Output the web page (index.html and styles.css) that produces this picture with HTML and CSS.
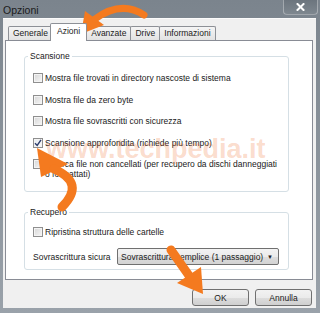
FILE: index.html
```html
<!DOCTYPE html>
<html lang="it">
<head>
<meta charset="utf-8">
<title>Opzioni</title>
<link rel="stylesheet" href="styles.css">
</head>
<body>
<div class="window">
  <div class="titlebar">
    <span class="title">Opzioni</span>
    <span class="close"><svg width="9" height="8" viewBox="0 0 9 8"><path d="M1.5 1 L7.5 7 M7.5 1 L1.5 7" stroke="#ffffff" stroke-width="2" stroke-linecap="square"/></svg></span>
  </div>
  <div class="client">
    <div class="tabs">
      <span class="tab">Generale</span>
      <span class="tab active">Azioni</span>
      <span class="tab">Avanzate</span>
      <span class="tab">Drive</span>
      <span class="tab">Informazioni</span>
    </div>
    <div class="panel">
      <fieldset class="group scan">
        <legend>Scansione</legend>
        <div class="rows">
          <div class="row"><span class="cb"></span><span>Mostra file trovati in directory nascoste di sistema</span></div>
          <div class="row"><span class="cb"></span><span>Mostra file da zero byte</span></div>
          <div class="row"><span class="cb"></span><span>Mostra file sovrascritti con sicurezza</span></div>
          <div class="row"><span class="cb checked"><svg width="8" height="8" viewBox="0 0 8 8"><path d="M1 4.2 L3.2 6.5 L7 0.8" fill="none" stroke="#2a3a6a" stroke-width="1.4"/></svg></span><span>Scansione approfondita (richiede più tempo)</span></div>
          <div class="row"><span class="cb"></span><span>Ricerca file non cancellati (per recupero da dischi danneggiati<br>o formattati)</span></div>
        </div>
      </fieldset>
      <fieldset class="group rec">
        <legend>Recupero</legend>
        <div class="rows rec-rows">
          <div class="row"><span class="cb"></span><span>Ripristina struttura delle cartelle</span></div>
          <div class="select-row">
            <span>Sovrascrittura sicura</span>
            <span class="select"><span>Sovrascrittura semplice (1 passaggio)</span><span class="caret">▼</span></span>
          </div>
        </div>
      </fieldset>
    </div>
    <div class="buttons">
      <span class="btn">OK</span>
      <span class="btn">Annulla</span>
    </div>
  </div>
  <div class="watermark">www.techpedia.it</div>
  <svg class="arrows" width="320" height="313" viewBox="0 0 320 313">
    <g fill="#f47a1f" stroke="none">
      <polygon points="81,34 85,11 104,25"/>
      <polygon points="37,148 41,177 68,164"/>
      <polygon points="203,294 177,283 201,267"/>
    </g>
    <g fill="none" stroke="#f47a1f" stroke-linecap="round">
      <path d="M95,19 Q121,0 144,15" stroke-width="7"/>
      <path d="M54,169 Q86,183 62,207" stroke-width="9"/>
      <path d="M171,250 L190,277" stroke-width="9"/>
    </g>
  </svg>
</div>
</body>
</html>
```

FILE: styles.css
```css
* { box-sizing: border-box; }
html, body { margin: 0; padding: 0; }
body {
  width: 320px;
  height: 313px;
  overflow: hidden;
  font-family: "Liberation Sans", Arial, sans-serif;
  font-size: 8.5px;
  color: #1a1a1a;
  background: #8a929b;
}
.window {
  position: relative;
  width: 320px;
  height: 313px;
  background: linear-gradient(#7b848d, #9aa2aa);
  display: flex;
  flex-direction: column;
  padding: 0 4px 5px 3px;
}
.titlebar {
  height: 18px;
  display: flex;
  align-items: center;
  justify-content: space-between;
}
.title {
  font-size: 10.5px;
  color: #1b1b1b;
  margin-top: 2px;
}
.close {
  align-self: flex-start;
  width: 35px;
  height: 15px;
  margin-right: -2px;
  border: 1px solid rgba(255,255,255,0.35);
  border-top: none;
  border-radius: 0 0 4px 4px;
  background: linear-gradient(#6c757e, #7e878f);
  display: flex;
  align-items: center;
  justify-content: center;
}
.client {
  flex: 1;
  background: #f0f0f0;
  border-top: 1px solid #fbfbfb;
  display: flex;
  flex-direction: column;
  padding: 0 3px 2px 2px;
}
.tabs {
  height: 21px;
  display: flex;
  align-items: flex-end;
  padding-left: 3px;
}
.tab {
  height: 14px;
  padding: 0 4px;
  line-height: 13px;
  border: 1px solid #8d9096;
  border-bottom: none;
  margin-right: -1px;
  background: linear-gradient(#f5f5f5, #e2e2e2);
  border-radius: 2px 2px 0 0;
}
.tab.active {
  position: relative;
  z-index: 1;
  height: 18px;
  margin: 0 -1px -1px -2px;
  padding: 0 6px;
  line-height: 14px;
  background: #ffffff;
}
.panel {
  height: 240px;
  border: 1px solid #898c95;
  background: #ffffff;
  padding: 10px 0 0 18px;
  display: flex;
  flex-direction: column;
  gap: 15px;
}
.group {
  margin: 0;
  width: 265px;
  min-width: 0;
  border: 1px solid #d5dfe5;
  border-radius: 3px;
  padding: 12px 0 12px 8px;
}
.group legend {
  padding: 0 2px;
  margin-left: -5px;
  line-height: 10px;
}
.rec { padding: 10px 9px 4px 8px; }
.rows {
  display: flex;
  flex-direction: column;
  gap: 11.5px;
}
.rec-rows { gap: 11px; }
.row {
  display: flex;
  align-items: flex-start;
  gap: 2px;
  line-height: 10px;
}
.cb {
  flex: none;
  width: 10px;
  height: 10px;
  border: 1px solid #8f8f8f;
  background: linear-gradient(135deg, #d6d6d6, #f7f7f7);
  box-shadow: inset 0 0 0 1px #f4f4f4;
  display: flex;
  align-items: center;
  justify-content: center;
}
.cb.checked { background: linear-gradient(135deg, #e4e8ee, #fbfbfb); }
.select-row {
  display: flex;
  align-items: center;
  justify-content: space-between;
}
.select {
  width: 162px;
  height: 17px;
  border: 1px solid #707070;
  border-radius: 2px;
  background: linear-gradient(#f3f3f3 0%, #ebebeb 50%, #dddddd 51%, #d3d3d3 100%);
  display: flex;
  align-items: center;
  justify-content: space-between;
  padding: 0 5px 0 3px;
}
.caret { font-size: 6px; color: #222; }
.buttons {
  margin-top: 9px;
  height: 17px;
  display: flex;
  justify-content: flex-end;
  gap: 6px;
  padding-right: 1px;
}
.btn {
  width: 57px;
  height: 17px;
  border: 1px solid #707070;
  border-radius: 3px;
  background: linear-gradient(#f2f2f2 0%, #ebebeb 50%, #dddddd 51%, #cfcfcf 100%);
  display: flex;
  align-items: center;
  justify-content: center;
}
.watermark {
  position: absolute;
  left: 46px;
  top: 136px;
  font-size: 27px;
  font-weight: bold;
  line-height: 27px;
  color: rgba(238, 105, 40, 0.24);
  pointer-events: none;
}
.arrows {
  position: absolute;
  left: 0;
  top: 0;
  pointer-events: none;
}
```
